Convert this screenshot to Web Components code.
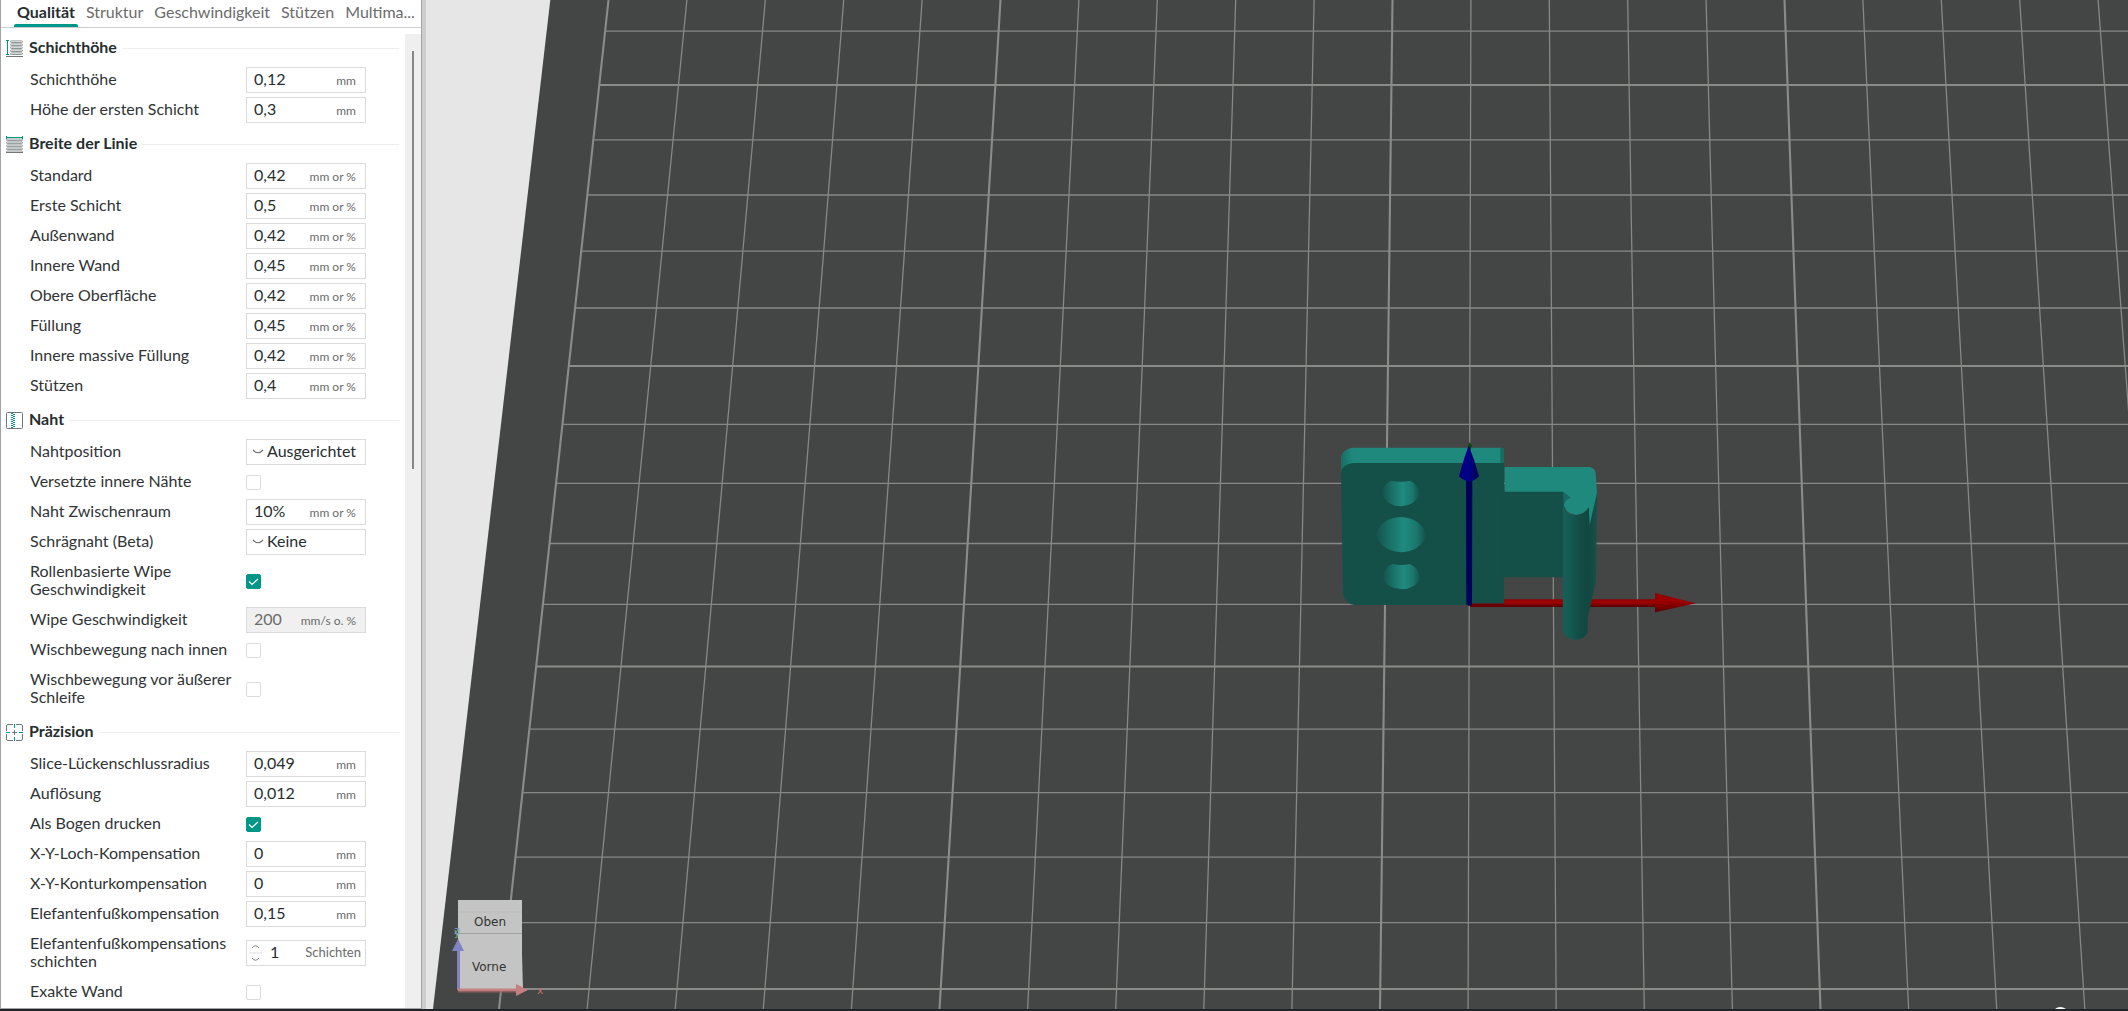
<!DOCTYPE html>
<html lang="de">
<head>
<meta charset="utf-8">
<title>Druckeinstellungen</title>
<style>
  html, body { height: 100%; }
  body {
    margin: 0;
    overflow: hidden;
    background: #fff;
    color: #303436;
    font: 16px/18px Lato, "Open Sans", sans-serif;
    --accent: #009688;
    --line: #dbdbdb;
    --muted: #6b6b6b;
    --strong: #262e30;
  }
</style>
</head>
<body>
<slicer-app>
  <settings-panel slot="panel">
    <tab-bar slot="tabs" tabs="Qualität|Struktur|Geschwindigkeit|Stützen|Multima..."></tab-bar>

    <setting-group heading="Schichthöhe" icon="height">
      <setting-field label="Schichthöhe" value="0,12" unit="mm"></setting-field>
      <setting-field label="Höhe der ersten Schicht" value="0,3" unit="mm"></setting-field>
    </setting-group>

    <setting-group heading="Breite der Linie" icon="width">
      <setting-field label="Standard" value="0,42" unit="mm or %"></setting-field>
      <setting-field label="Erste Schicht" value="0,5" unit="mm or %"></setting-field>
      <setting-field label="Außenwand" value="0,42" unit="mm or %"></setting-field>
      <setting-field label="Innere Wand" value="0,45" unit="mm or %"></setting-field>
      <setting-field label="Obere Oberfläche" value="0,42" unit="mm or %"></setting-field>
      <setting-field label="Füllung" value="0,45" unit="mm or %"></setting-field>
      <setting-field label="Innere massive Füllung" value="0,42" unit="mm or %"></setting-field>
      <setting-field label="Stützen" value="0,4" unit="mm or %"></setting-field>
    </setting-group>

    <setting-group heading="Naht" icon="seam">
      <setting-field type="select" label="Nahtposition" value="Ausgerichtet"></setting-field>
      <setting-field type="check" label="Versetzte innere Nähte"></setting-field>
      <setting-field label="Naht Zwischenraum" value="10%" unit="mm or %"></setting-field>
      <setting-field type="select" label="Schrägnaht (Beta)" value="Keine"></setting-field>
      <setting-field type="check" label="Rollenbasierte Wipe Geschwindigkeit" checked></setting-field>
      <setting-field label="Wipe Geschwindigkeit" value="200" unit="mm/s o. %" disabled></setting-field>
      <setting-field type="check" label="Wischbewegung nach innen"></setting-field>
      <setting-field type="check" label="Wischbewegung vor äußerer Schleife"></setting-field>
    </setting-group>

    <setting-group heading="Präzision" icon="precision">
      <setting-field label="Slice-Lückenschlussradius" value="0,049" unit="mm"></setting-field>
      <setting-field label="Auflösung" value="0,012" unit="mm"></setting-field>
      <setting-field type="check" label="Als Bogen drucken" checked></setting-field>
      <setting-field label="X-Y-Loch-Kompensation" value="0" unit="mm"></setting-field>
      <setting-field label="X-Y-Konturkompensation" value="0" unit="mm"></setting-field>
      <setting-field label="Elefantenfußkompensation" value="0,15" unit="mm"></setting-field>
      <setting-field type="spin" label="Elefantenfußkompensations|schichten" value="1" unit="Schichten"></setting-field>
      <setting-field type="check" label="Exakte Wand"></setting-field>
    </setting-group>
  </settings-panel>
  <build-plate slot="scene"></build-plate>
</slicer-app>

<script>
class SlicerApp extends HTMLElement {
  connectedCallback() {
    this.attachShadow({ mode: 'open' }).innerHTML = `
      <style>
        :host { display: flex; flex-direction: column; height: 100vh; }
        main { flex: 1; display: flex; min-height: 0; }
        .sash { flex: none; width: 4px; background: #cdcdcd; }
        ::slotted(build-plate) { flex: 1; min-width: 0; }
        footer { flex: none; height: 2px; background: #202328; }
      </style>
      <main><slot name="panel"></slot><div class="sash"></div><slot name="scene"></slot></main>
      <footer></footer>`;
  }
}

class SettingsPanel extends HTMLElement {
  connectedCallback() {
    this.attachShadow({ mode: 'open' }).innerHTML = `
      <style>
        :host { display: flex; flex-direction: column; flex: none; width: 422px; box-sizing: border-box;
                border: 1px solid #a3a3a3; border-top: 0; background: #fff; }
        .body { flex: 1; display: flex; min-height: 0; }
        .list { flex: 1; min-width: 0; overflow: hidden; padding: 3px 6px 0 5px; }
        .track { flex: none; width: 16px; margin-top: 6px; background: #efefef; }
        .thumb { width: 2px; height: 418px; margin: 17px 0 0 7px; background: #878787; }
      </style>
      <slot name="tabs"></slot>
      <div class="body">
        <div class="list"><slot></slot></div>
        <div class="track"><div class="thumb"></div></div>
      </div>`;
  }
}

class TabBar extends HTMLElement {
  connectedCallback() {
    const tabs = this.getAttribute('tabs').split('|');
    this.attachShadow({ mode: 'open' }).innerHTML = `
      <style>
        :host { display: block; border-bottom: 1px solid #cecece; }
        nav { display: flex; gap: 5px; height: 27px; padding-left: 13px; }
        button { flex: none; display: flex; flex-direction: column; justify-content: space-between;
                 border: 0; background: none; padding: 3px 0 0; font: inherit; color: var(--muted); }
        span { padding: 0 3px; }
        button::after { content: ""; align-self: stretch; height: 3px; border-radius: 2px 2px 0 0; }
        button[aria-selected=true] { color: var(--strong); font-weight: bold; }
        button[aria-selected=true]::after { background: var(--accent); }
      </style>
      <nav role="tablist">${tabs.map((t, i) =>
        `<button type="button" role="tab" aria-selected="${i === 0}"><span>${t}</span></button>`).join('')}</nav>`;
  }
}

const layers = (x1, x2, y0) => [0, 1, 2, 3, 4].map(i =>
  `<rect x="${x1}" y="${y0 + i * 3}" width="${x2 - x1}" height="1.6" rx=".8" fill="none" stroke="#858b8b" stroke-width=".9"/>`).join('');
const ICONS = {
  height: `${layers(4.5, 16.5, .9)}<path d="M0 16.5h17" stroke="#6f7777"/><path d="M0 .5h3M0 14.5h3M1.5 .5v14" stroke="#009688"/>`,
  width: `${layers(.5, 16.5, 3)}<path d="M0 16.5h17" stroke="#6f7777"/><path d="M.5 0v3M16.5 0v3M.5 1.5h16" stroke="#009688"/>`,
  seam: `<rect x=".5" y=".5" width="16" height="16" rx="1" stroke="#6f7777"/><path d="M6 1v15M8 2v14" stroke="#009688" stroke-width="2" stroke-dasharray="1 1"/>`,
  precision: `<path d="M.5 7V2Q.5 .5 2 .5H7M10 .5h5Q16.500 .5 16.500 2V7M16.500 10v5q0 1.500-1.500 1.500h-5M7 16.500H2Q.5 16.500 .5 15v-5" stroke="#6f7777"/><path d="M8.500 6v5M6 8.500h5" stroke="#6f7777"/><path d="M8.500 0v4M8.500 13v4M0 8.500h4M13 8.500h4" stroke="#009688"/>`
};

class SettingGroup extends HTMLElement {
  connectedCallback() {
    this.attachShadow({ mode: 'open' }).innerHTML = `
      <style>
        :host { display: block; margin-bottom: 2px; }
        header { display: flex; align-items: center; height: 34px; }
        svg { flex: none; width: 17px; height: 17px; margin-right: 6px; }
        h2 { margin: 0; padding-bottom: 2px; font: inherit; font-weight: bold; color: var(--strong); }
        i { flex: 1; height: 1px; margin-left: 5px; background: #eee; }
      </style>
      <header><svg viewBox="0 0 17 17" fill="none">${ICONS[this.getAttribute('icon')]}</svg>
      <h2>${this.getAttribute('heading')}</h2><i></i></header>
      <slot></slot>`;
  }
}

class SettingField extends HTMLElement {
  connectedCallback() {
    const a = n => this.getAttribute(n) || '';
    const type = a('type') || 'text';
    const off = this.hasAttribute('disabled') ? 'disabled' : '';
    const unit = a('unit') ? `<span class="unit">${a('unit')}</span>` : '';
    const control = {
      text: `<div class="box ${off}"><input id="c" type="text" value="${a('value')}" ${off}>${unit}</div>`,
      select: `<div class="box drop"><svg width="12" height="6" viewBox="0 0 12 6"><path d="M1 1Q6 6.500 11 1" fill="none" stroke="#6c7272" stroke-width="1.200"/></svg><select id="c"><option>${a('value')}</option></select></div>`,
      spin: `<div class="box spin"><svg width="13" height="18" viewBox="0 0 13 18" fill="none" stroke="#7b8080"><path d="M3 4Q6.500-.5 10 4M3 14Q6.500 18.500 10 14"/><path d="M0 9h13" stroke="#dbdbdb"/></svg><input id="c" type="number" value="${a('value')}">${unit}</div>`,
      check: `<div class="check"><input id="c" type="checkbox" ${this.hasAttribute('checked') ? 'checked' : ''}><svg viewBox="0 0 15 15"><path d="M3 7.500l3 3L12 5" fill="none" stroke="#fff" stroke-width="1.200"/></svg></div>`
    }[type];
    this.attachShadow({ mode: 'open' }).innerHTML = `
      <style>
        :host { display: flex; align-items: center; padding: 2px 0 2px 24px; min-height: 26px; }
        label { flex: none; width: 206px; margin-right: 10px; padding-bottom: 2px; }
        label.two { padding: 3px 0 5px; }
        .box { box-sizing: border-box; width: 120px; height: 26px; display: flex; align-items: center;
               border: 1px solid var(--line); background: #fff; padding: 0 9px 0 7px; }
        .box.disabled { background: #f0f0f0; }
        input, select { flex: 1; min-width: 0; width: 0; border: 0; padding: 0 0 2px; margin: 0; outline: 0;
                        background: none; font: inherit; color: var(--strong); appearance: none; }
        input:disabled { color: var(--muted); opacity: 1; }
        input[type=number] { -moz-appearance: textfield; }
        input::-webkit-inner-spin-button { display: none; }
        .unit { font-size: 12px; line-height: 18px; color: var(--muted); padding-top: 2px; }
        .drop { padding: 0 0 0 5px; gap: 3px; }
        .spin { padding: 0 4px 0 2px; gap: 8px; }
        .spin .unit { font-size: 13px; padding: 0 0 2px; }
        .check { display: grid; width: 15px; height: 15px; }
        .check > * { grid-area: 1 / 1; width: 15px; height: 15px; box-sizing: border-box; }
        .check input { border: 1px solid var(--line); border-radius: 2px; background: #fff; }
        .check input:checked { background: var(--accent); border-color: var(--accent); }
        .check svg { visibility: hidden; pointer-events: none; }
        .check input:checked + svg { visibility: visible; }
      </style>
      <label for="c">${a('label').replace('|', '<wbr>')}</label>${control}`;
    const label = this.shadowRoot.querySelector('label');
    if (label.offsetHeight > 24) label.className = 'two';
  }
}

class BuildPlate extends HTMLElement {
  connectedCallback() {
    const H = 1009;
    const topX = k => 608.5 + 78.4 * k, botX = k => 499 + 88.1 * k;
    let minor = '', major = '';
    for (let k = 0; k <= 20; k++) {
      const d = `M${topX(k).toFixed(1)} 0L${botX(k).toFixed(1)} ${H}`;
      if (k % 5) minor += d; else major += d;
    }
    [31.2, 85, 139.8, 195, 251.2, 308, 366, 424.3, 483.4, 543.5, 604.4, 666.5, 729.2, 792.6, 857.2, 922.6, 989].forEach((y, i) => {
      const d = `M${(608.5 - 109.5 * y / H).toFixed(1)} ${y}H2400`;
      if (i % 5 === 1) major += d; else minor += d;
    });
    this.attachShadow({ mode: 'open' }).innerHTML = `
      <style>
        :host { display: block; background: #e6e6e6; overflow: hidden; }
        svg { display: block; width: 100%; height: 100%; }
        text { font-family: "DejaVu Sans", sans-serif; font-size: 12px; fill: #333; }
        .axis { font-size: 11px; }
      </style>
      <svg viewBox="426 0 1702 1009" preserveAspectRatio="xMinYMin slice" role="img" aria-label="Druckplatte">
        <defs>
          <linearGradient id="hole"><stop offset="0" stop-color="#14524b"/><stop offset=".3" stop-color="#1a7369"/><stop offset=".55" stop-color="#1f8b80"/><stop offset=".8" stop-color="#1b776d"/><stop offset="1" stop-color="#125049"/></linearGradient>
          <linearGradient id="rod"><stop offset="0" stop-color="#165f57"/><stop offset=".3" stop-color="#145a52"/><stop offset=".65" stop-color="#124c45"/><stop offset="1" stop-color="#114740"/></linearGradient>
          <linearGradient id="side"><stop offset="0" stop-color="#11463f"/><stop offset="1" stop-color="#145149"/></linearGradient>
          <linearGradient id="edge"><stop offset="0" stop-color="#186d63"/><stop offset="1" stop-color="#1f8a7e"/></linearGradient>
          <linearGradient id="red" x2="0" y2="1"><stop offset="0" stop-color="#8e0000"/><stop offset=".4" stop-color="#a00000"/><stop offset="1" stop-color="#560000"/></linearGradient>
          <linearGradient id="blue"><stop offset="0" stop-color="#00006e"/><stop offset=".4" stop-color="#000090"/><stop offset="1" stop-color="#000050"/></linearGradient>
        </defs>
        <path d="M550.300 0H2500V1009H433Z" fill="#444645"/>
        <path d="${minor}" stroke="#868886" stroke-width="1.300" fill="none"/>
        <path d="${major}" stroke="#8a8c8a" stroke-width="2.100" fill="none"/>
        <g transform="translate(1320 420) scale(.33333)">
          <path d="M450 550H560V561H450Z" fill="#6a0000"/>
          <path d="M552 538H1005V561H552Z" fill="url(#red)"/>
          <path d="M1005 519L1128 550L1005 577Z" fill="url(#red)"/>
          <path d="M63 155V118Q65 88 100 83H545Q552 84 552 92V140H63Z" fill="#1f897e"/>
          <path d="M63 155V118Q65 88 100 83V129Z" fill="url(#edge)"/>
          <path d="M541 83Q552 84 552 92V140H541Z" fill="#176b61"/>
          <path d="M63 160Q66 131 103 129H552V550H456V555H103Q72 550 69 520Z" fill="#145048"/>
          <path d="M550 212H735V472H550Z" fill="#145048"/>
          <path d="M800 250L831 215L828 485L804 590Z" fill="url(#side)"/>
          <path d="M554 141H808Q825 143 827 160L831 218L809 315L806 262Q790 285 768 285Q735 280 731 252Q738 236 752 233L729 215H554Z" fill="#1f897e"/>
          <path d="M729 215L752 233Q738 236 731 252Z" fill="#186b62"/>
          <path d="M729 250Q735 284 768 285Q797 282 807 262L803 636Q796 658 766 659Q734 656 728 632Z" fill="url(#rod)"/>
          <path d="M185 221Q193 188 214 182Q241 188 270 182Q292 192 300 222Q285 257 243 259Q200 257 185 221Z" fill="url(#hole)"/>
          <path d="M167 346Q182 294 243 291Q302 294 320 346Q300 395 244 397Q186 394 167 346Z" fill="url(#hole)"/>
          <path d="M188 473Q196 438 218 432Q243 438 270 432Q293 442 302 473Q286 507 245 508Q202 506 188 473Z" fill="url(#hole)"/>
          <path d="M448 66L455 76L452 90H444Z" fill="#004c00"/>
          <path d="M438 180H457L456 555L447 558L439 553Z" fill="#000058"/>
          <path d="M446 76L463 122L477 169Q464 183 447 185Q430 182 417 169L431 120Z" fill="url(#blue)"/>
        </g>
        <path d="M458 900H522V954L523 990H458Z" fill="#c4c4c4"/>
        <path d="M458 912H522" stroke="#bababa"/>
        <path d="M458 933.500H522" stroke="#a0a2a2"/>
        <text x="474" y="926">Oben</text>
        <text x="472" y="971">Vorne</text>
        <text class="axis" x="454" y="936" style="fill:#74b98e">y</text>
        <text class="axis" x="454" y="934" style="fill:#7f9fb8">z</text>
        <path d="M458.500 990V948" stroke="#8282c2" stroke-width="3"/>
        <path d="M458 939L464 951H452Z" fill="#8282c2"/>
        <path d="M458 990H517" stroke="#c48080" stroke-width="3"/>
        <path d="M458 992H517" stroke="#8f5c5c"/>
        <path d="M516 984L528 990L516 996Z" fill="#c48080"/>
        <text class="axis" x="537" y="994" style="fill:#b96f6f">x</text>
        <path d="M2055 1009Q2060 1005 2066 1009Z" fill="#fff"/>
      </svg>`;
  }
}

customElements.define('slicer-app', SlicerApp);
customElements.define('settings-panel', SettingsPanel);
customElements.define('tab-bar', TabBar);
customElements.define('setting-group', SettingGroup);
customElements.define('setting-field', SettingField);
customElements.define('build-plate', BuildPlate);
</script>
</body>
</html>
